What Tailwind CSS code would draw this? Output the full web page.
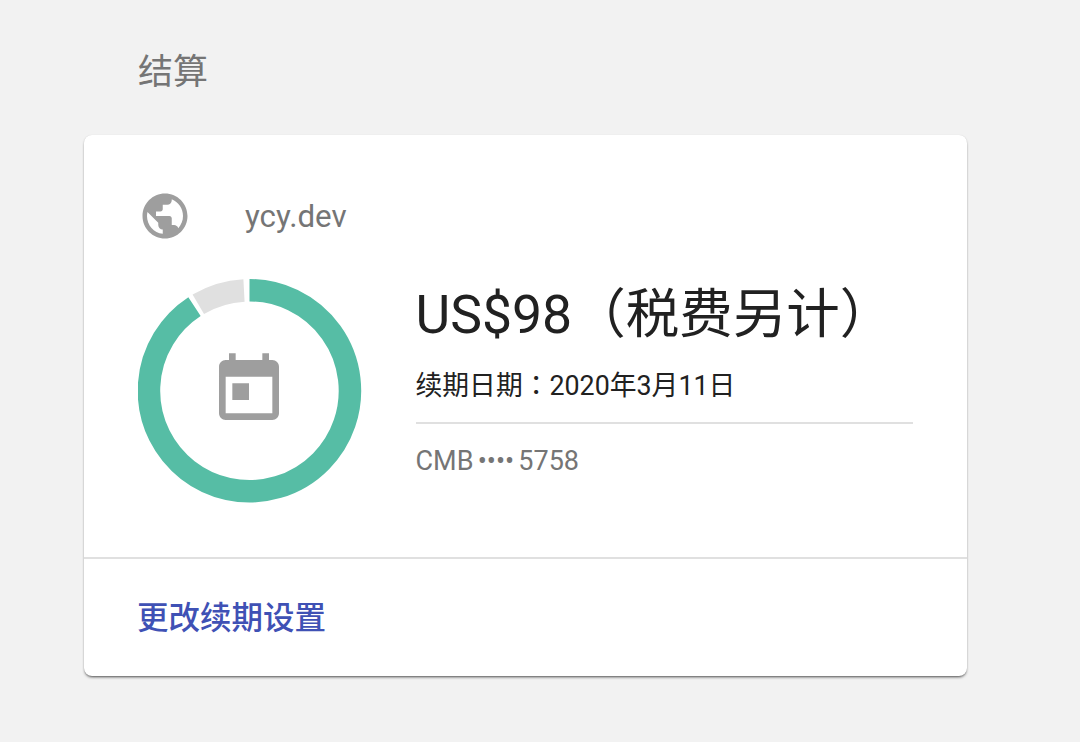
<!DOCTYPE html>
<html lang="zh-CN">
<head>
    <meta charset="UTF-8">
    <title>结算</title>
    <script src="https://cdn.jsdelivr.net/npm/@tailwindcss/browser@4"></script>
</head>
<body class="bg-[#f2f2f2] font-['Roboto','Noto_Sans_CJK_SC',sans-serif] h-[742px] overflow-hidden">
    <!-- 标题 -->
    <div class="h-[135px] pl-[138px] pt-[52px]">
        <h1 class="text-[35px] leading-[42px] text-[#757575]">结算</h1>
    </div>

    <!-- 卡片 -->
    <div class="ml-[84px] w-[883px] bg-white rounded-lg shadow-[0_2px_3px_-1px_rgba(0,0,0,0.7),0_0_1px_rgba(0,0,0,0.15)]">
        <div class="h-[424px] px-[54px] pt-[54px] border-b-2 border-[#e0e0e0]">
            <div class="flex items-center h-[54px]">
                <svg class="w-[54px] h-[54px] fill-[#9e9e9e]" viewBox="0 0 24 24"><path d="M12 2C6.48 2 2 6.48 2 12s4.48 10 10 10 10-4.48 10-10S17.52 2 12 2zm-1 17.93c-3.95-.49-7-3.85-7-7.93 0-.62.08-1.21.21-1.79L9 15v1c0 1.1.9 2 2 2v1.93zm6.9-2.54c-.26-.81-1-1.39-1.9-1.39h-1v-3c0-.55-.45-1-1-1H8v-2h2c.55 0 1-.45 1-1V7h2c1.1 0 2-.9 2-2v-.41c2.93 1.19 5 4.06 5 7.41 0 2.08-.8 3.97-2.1 5.39z"/></svg>
                <span class="ml-[53px] mt-[2px] text-[31.3px] text-[#757575]">ycy.dev</span>
            </div>
            <div class="flex mt-[36px]">
                <div class="relative w-[224px] h-[224px] shrink-0">
                    <svg class="w-[224px] h-[224px]" viewBox="0 0 224 224" fill="none" stroke-width="22.5">
                        <path d="M111.5 11.25A100.5 100.5 0 1 1 56.5 27.6" stroke="#56bda5"/>
                        <path d="M60.3 25.2A100.5 100.5 0 0 1 106 11.4" stroke="#e0e0e0"/>
                    </svg>
                    <svg class="absolute left-[71px] top-[71px] w-[80px] h-[80px] fill-[#9e9e9e]" viewBox="0 0 24 24"><path d="M12 10H7v5h5v-5zM16 1v2H8V1H6v2H5c-1.11 0-1.99.9-1.99 2L3 19c0 1.1.89 2 2 2h14c1.1 0 2-.9 2-2V5c0-1.1-.9-2-2-2h-1V1h-2zm3 18H5V8h14v11z"/></svg>
                </div>
                <div class="ml-[53.5px] flex-1">
                    <div class="text-[53.5px] leading-[72px] text-[#212121]">US$98（税费另计）</div>
                    <div class="text-[26.8px] leading-[36px] text-[#212121] mt-[15px]">续期日期<span lang="zh-TW" class="font-['Noto_Sans_CJK_TC',sans-serif]">：</span>2020年3月11日</div>
                    <div class="mt-[18px] border-t-2 border-[#e0e0e0] pt-[19px] text-[27px] leading-[36px] [word-spacing:-2.5px] text-[#757575]">CMB •••• 5758</div>
                </div>
            </div>
        </div>
        <div class="h-[117px] pl-[53px] pt-[3px] flex items-center">
            <a class="text-[31.5px] font-medium text-[#3f51b5]">更改续期设置</a>
        </div>
    </div>
</body>
</html>
